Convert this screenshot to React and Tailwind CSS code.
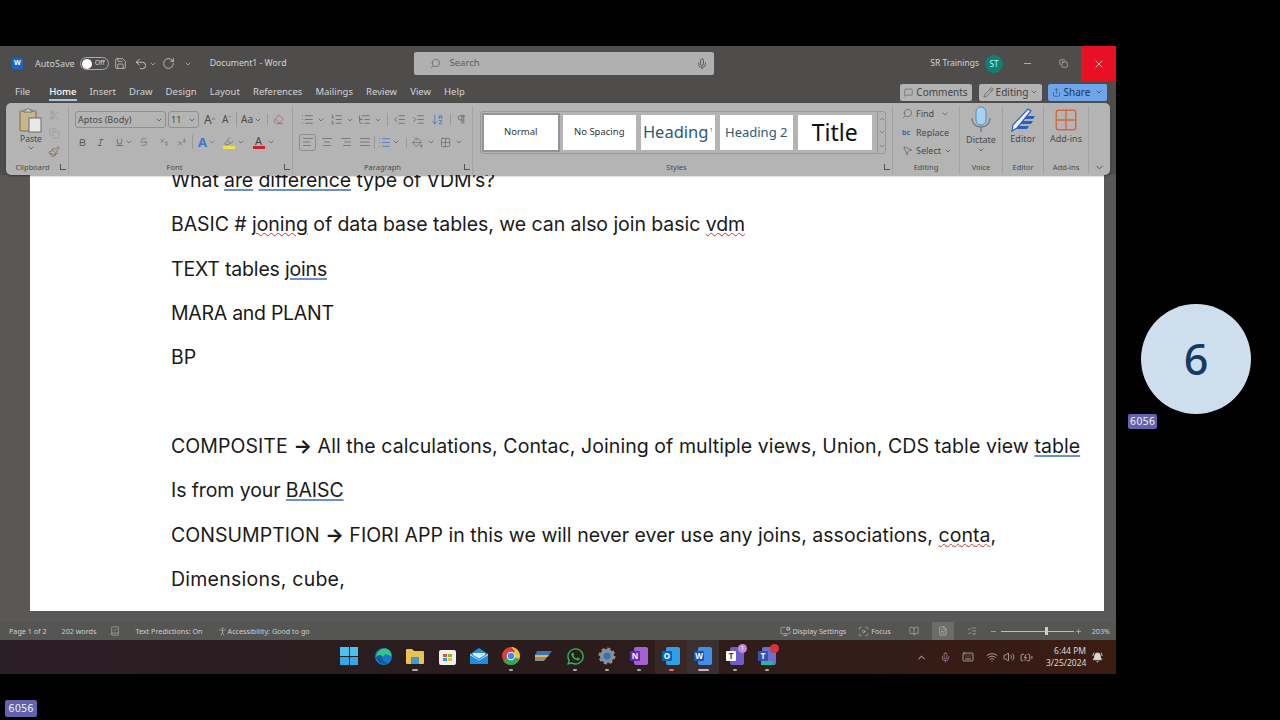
import {
  AlignCenter, AlignJustify, AlignLeft, AlignRight, ArrowDownAZ, Bold, BookOpen, ChevronDown, ChevronUp, Copy, Eraser,
  Grid2x2, Highlighter, IndentDecrease, IndentIncrease, Italic, Keyboard, List, ListOrdered, ListTree, Mic, Minus, MonitorCog,
  MousePointer2, PaintBucket, Paintbrush, Pencil, Pilcrow, Plus, RotateCw, Save, Scissors, Search, Share, Strikethrough, Subscript,
  Superscript, Underline, Undo2, Volume2, Wifi, X, MessageSquare, FileText, BellRing, BatteryCharging, Focus, PersonStanding, BookCheck, ListChecks,
} from 'lucide-react';
import { FaWhatsapp } from 'react-icons/fa';

const TABS = ['Insert', 'Draw', 'Design', 'Layout', 'References', 'Mailings', 'Review', 'View', 'Help'];

const DOC_LINES = [
  { id: 1, track: 'tracking-[-0.1px]', parts: ['What ', ['are', 'b'], ' ', ['difference', 'b'], ' type of VDM’s?'] },
  { id: 2, track: 'tracking-[-0.06px]', parts: ['BASIC # ', ['joning', 'r'], ' of data base tables, we can also join basic ', ['vdm', 'r']] },
  { id: 3, track: 'tracking-[-0.18px]', parts: ['TEXT tables ', ['joins', 'b']] },
  { id: 4, track: 'tracking-[-0.28px]', parts: ['MARA and PLANT'] },
  { id: 5, track: '', parts: ['BP'] },
  { id: 6, track: '', parts: ['\u00a0'] },
  { id: 7, track: 'tracking-[0.07px]', parts: ['COMPOSITE ', ['→', 'a'], ' All the calculations, Contac, Joining of multiple views, Union, CDS table view ', ['table', 'b']] },
  { id: 8, track: 'tracking-[-0.1px]', parts: ['Is from your ', ['BAISC', 'b']] },
  { id: 9, track: 'tracking-[0.03px]', parts: ['CONSUMPTION ', ['→', 'a'], ' FIORI APP in this we will never ever use any joins, associations, ', ['conta', 'r'], ','] },
  { id: 10, track: 'tracking-[0.24px]', parts: ['Dimensions, cube,'] },
];

const MARK_CLASS = {
  r: 'underline decoration-wavy decoration-[#c0392b] decoration-1',
  b: 'underline decoration-[#6c90c8] decoration-[1.5px] underline-offset-2',
  a: 'font-bold',
};

function Caret({ className = 'text-[#444]' }) {
  return <ChevronDown size={8} strokeWidth={2} className={className} />;
}

function Group({ width, label, launcher, labelClass = '', children }) {
  return (
    <div className="flex flex-col shrink-0 border-r border-[#a2a2a2] mt-[3px] mb-[1px]" style={{ width }}>
      <div className="flex-1 min-h-0">{children}</div>
      <div className={`h-[13px] flex items-center justify-center relative text-[7.5px] text-[#4a4a4a] ${labelClass}`}>
        {label}
        {launcher && <span className="absolute right-[2px] top-[3px] w-[6px] h-[6px] border-l border-b border-[#555]" />}
      </div>
    </div>
  );
}

function StyleCard({ children, selected }) {
  return (
    <div className={`w-[73.5px] h-[35px] bg-white shrink-0 flex items-center justify-center text-[#333] overflow-hidden ${selected ? 'outline-2 outline-[#949494]' : ''}`}>
      {children}
    </div>
  );
}

function TaskIcon({ children, mark }) {
  return (
    <div className="w-[32px] h-[34px] flex flex-col items-center justify-center relative">
      {children}
      {mark && <span className={`absolute bottom-[3px] h-[2px] rounded-full ${mark}`} />}
    </div>
  );
}

function OfficeTile({ letter, letterBg, back }) {
  return (
    <div className="relative w-[18px] h-[18px] -mt-[2px]">
      <div className={`absolute right-0 top-0 w-[14px] h-[18px] rounded-[2px] ${back}`} />
      <div className={`absolute left-0 top-[4px] w-[10px] h-[10px] rounded-[1px] ${letterBg} flex items-center justify-center text-[8px] font-bold text-white`}>{letter}</div>
    </div>
  );
}

function PasteIcon() {
  return (
    <svg width="24" height="26" viewBox="0 0 24 26">
      <rect x="1" y="4" width="16" height="20" rx="1" fill="#c9b78c" stroke="#7d6b44" />
      <path d="M5 5V3h2.5a1.8 1.8 0 013.5 0H13v2z" fill="#d8d8d8" stroke="#6f6f6f" />
      <rect x="10" y="11" width="12" height="14" fill="#e8e8e8" stroke="#6a6a6a" />
    </svg>
  );
}

function MicIcon() {
  return (
    <svg width="22" height="28" viewBox="0 0 22 28">
      <rect x="6" y="1" width="10" height="18" rx="5" fill="#a9d0ee" stroke="#4f8fc6" />
      <path d="M2 12c0 6 4 9 9 9s9-3 9-9" fill="none" stroke="#6a7d8c" strokeWidth="1.3" />
      <path d="M11 21v5" stroke="#6a7d8c" strokeWidth="1.3" />
    </svg>
  );
}

function EditorIcon() {
  return (
    <svg width="24" height="25" viewBox="0 0 24 25">
      <path d="M10 8h14l-2 3H9zM8 13h14l-2 3H7zM6 18h12l-2 3H5z" fill="#2c5fc2" />
      <path d="M17 1l3 2L6 20l-5 3 1-6z" fill="#f2f2f2" stroke="#2c5fc2" strokeWidth="1.2" />
    </svg>
  );
}

export default function App() {
  return (
    <div className="relative w-[1280px] h-[720px] bg-black overflow-hidden pt-[46px] font-['Noto_Sans',sans-serif]">
      <div className="w-[1116px] h-[628px] bg-[#4f4c4c] flex flex-col">
        {/* title bar */}
        <div className="h-[35px] shrink-0 flex items-center text-[#d6d6d6] text-[9px]">
          <div className="ml-[12px] w-[11px] h-[11px] rounded-[1px] bg-[#1d63c8] text-white text-[7px] font-bold flex items-center justify-center">W</div>
          <span className="ml-[12px] text-[#d0d0d0]">AutoSave</span>
          <div className="ml-[5px] w-[29px] h-[13px] rounded-full border border-[#aaa] flex items-center gap-[3px] pl-[1px]">
            <span className="w-[10px] h-[10px] rounded-full bg-white" />
            <span className="text-[7px]">Off</span>
          </div>
          <Save size={13} strokeWidth={1.3} className="ml-[5px]" />
          <Undo2 size={14} strokeWidth={1.4} className="ml-[7px]" />
          <Caret className="ml-[1px] text-[#ccc]" />
          <RotateCw size={13} strokeWidth={1.4} className="ml-[5px]" />
          <Caret className="ml-[9px] text-[#ccc]" />
          <span className="ml-[18px] text-[8.7px]">Document1 - Word</span>
          <div className="ml-[127px] w-[300px] h-[23px] bg-[#b0b0b0] rounded-[2px] flex items-center text-[#5d5d5d] pl-[16px] pr-[6px]">
            <Search size={11} strokeWidth={1.5} className="-scale-x-100" />
            <span className="ml-[9px] text-[9.5px]">Search</span>
            <Mic size={12} className="ml-auto" />
          </div>
          <span className="ml-auto text-[8.5px]">SR Trainings</span>
          <div className="ml-[6px] w-[18px] h-[18px] rounded-full bg-[#0f7f78] flex items-center justify-center text-[8px] text-[#bfe]">ST</div>
          <Minus size={11} strokeWidth={1.5} className="ml-[19px]" />
          <Copy size={9} strokeWidth={1.5} className="ml-[26px]" />
          <div className="ml-[13px] w-[35px] h-[35px] bg-[#e81123] flex items-center justify-center">
            <X size={12} strokeWidth={1.6} className="text-white" />
          </div>
        </div>

        {/* tabs */}
        <div className="h-[22px] shrink-0 flex items-center text-[9.5px] text-[#d4d4d4] pl-[15px]">
          <span>File</span>
          <div className="ml-[19px] font-medium text-white border-b-2 border-[#a9c6e8] h-[17px] leading-[15px]">Home</div>
          <div className="ml-[13px] flex gap-[13.1px]">
            {TABS.map((t) => <span key={t}>{t}</span>)}
          </div>
          <div className="ml-auto flex items-center mr-[9px] text-[#444] text-[10px]">
            <div className="w-[72px] h-[17px] bg-[#b3b3b3] rounded-[2px] flex items-center justify-center gap-[3px]">
              <MessageSquare size={9} strokeWidth={1.3} />Comments
            </div>
            <div className="ml-[7px] w-[63px] h-[17px] bg-[#b3b3b3] rounded-[2px] flex items-center justify-center gap-[2px]">
              <Pencil size={11} strokeWidth={1.3} />Editing<Caret />
            </div>
            <div className="ml-[6px] w-[59px] h-[17px] bg-[#6fa5ea] rounded-[2px] flex items-center justify-center gap-[3px] text-[#23354f]">
              <Share size={9} strokeWidth={1.3} />Share<Caret className="ml-[2px] text-[#23354f]" />
            </div>
          </div>
        </div>

        {/* ribbon */}
        <div className="relative z-10 mx-[6px] h-[72px] shrink-0 bg-[#b4b4b4] rounded-[5px] flex text-[#4a4a4a] shadow-[0_1px_2px_rgba(0,0,0,0.4)]">
          <Group width={63} label="Clipboard" launcher labelClass="pr-[9px]">
            <div className="flex pt-[1px] pl-[13px] gap-[5px]">
              <div className="flex flex-col items-center">
                <PasteIcon />
                <span className="text-[8.5px] mt-[1px] leading-[10px]">Paste</span>
                <Caret />
              </div>
              <div className="flex flex-col gap-[7px] items-center pt-[3px]">
                <Scissors size={11} strokeWidth={1} className="text-[#8a8a8a]" />
                <Copy size={11} strokeWidth={1} className="text-[#8a8a8a]" />
                <Paintbrush size={12} strokeWidth={1.4} className="text-[#6e5c30]" />
              </div>
            </div>
          </Group>

          <Group width={224} label="Font" launcher labelClass="pr-[12px]">
            <div className="pl-[6px] pt-[5px]">
              <div className="flex items-center h-[17px]">
                <div className="w-[91px] h-[17px] border border-[#8f8f8f] rounded-[3px] flex items-center justify-between px-[2px] text-[9px]">Aptos (Body)<Caret /></div>
                <div className="ml-[2px] w-[31px] h-[17px] border border-[#8f8f8f] rounded-[3px] flex items-center justify-between px-[2px] text-[9px]">11<Caret /></div>
                <span className="ml-[5px] text-[12px]">A<sup className="text-[6px]">^</sup></span>
                <span className="ml-[7px] text-[10px]">A<sup className="text-[6px]">ˇ</sup></span>
                <span className="ml-[5px] pl-[4px] border-l border-[#999] text-[10px] flex items-center gap-[1px]">Aa<Caret /></span>
                <span className="ml-[5px] pl-[5px] border-l border-[#999]"><Eraser size={11} strokeWidth={1.3} className="text-[#a8416b]" /></span>
              </div>
              <div className="flex items-center h-[18px] mt-[5px] pl-[3px] text-[#555]">
                <Bold size={9} strokeWidth={2.5} />
                <Italic size={9} className="ml-[9px]" />
                <Underline size={9} className="ml-[10px]" /><Caret className="ml-[1px]" />
                <Strikethrough size={10} strokeWidth={1.2} className="ml-[6px]" />
                <Subscript size={10} strokeWidth={1.3} className="ml-[10px]" />
                <Superscript size={10} strokeWidth={1.3} className="ml-[8px]" />
                <span className="ml-[5px] pl-[5px] border-l border-[#999] flex items-center font-bold text-[13px] leading-[14px] text-[#3b78c9]">A<Caret className="ml-[1px]" /></span>
                <div className="ml-[6px] flex flex-col items-center w-[13px]"><Highlighter size={10} strokeWidth={1.3} /><span className="w-[12px] h-[3px] bg-[#f1e24c]" /></div>
                <Caret className="ml-[2px]" />
                <div className="ml-[7px] flex flex-col items-center w-[13px]"><span className="text-[11px] leading-[11px] text-[#444]">A</span><span className="w-[12px] h-[3px] bg-[#c9242b]" /></div>
                <Caret className="ml-[2px]" />
              </div>
            </div>
          </Group>

          <Group width={180} label="Paragraph" launcher>
            <div className="pl-[8px] pt-[5px] text-[#555]">
              <div className="flex items-center h-[17px]">
                <List size={13} strokeWidth={1.2} /><Caret className="ml-[3px]" />
                <ListOrdered size={13} strokeWidth={1.2} className="ml-[5px]" /><Caret className="ml-[3px]" />
                <ListTree size={13} strokeWidth={1.2} className="ml-[4px]" /><Caret className="ml-[3px]" />
                <span className="ml-[5px] pl-[5px] border-l border-[#999]"><IndentDecrease size={13} strokeWidth={1.2} /></span>
                <IndentIncrease size={13} strokeWidth={1.2} className="ml-[6px]" />
                <ArrowDownAZ size={13} strokeWidth={1.3} className="ml-[6px] text-[#2f6fb5]" />
                <span className="ml-[6px] pl-[5px] border-l border-[#999]"><Pilcrow size={11} strokeWidth={1.5} /></span>
              </div>
              <div className="flex items-center h-[18px] mt-[5px] -ml-[2px]">
                <span className="w-[17px] h-[17px] border border-[#8f8f8f] rounded-[3px] flex items-center justify-center"><AlignLeft size={12} strokeWidth={1.2} /></span>
                <AlignCenter size={12} strokeWidth={1.2} className="ml-[5px]" />
                <AlignRight size={12} strokeWidth={1.2} className="ml-[7px]" />
                <AlignJustify size={12} strokeWidth={1.2} className="ml-[7px]" />
                <span className="ml-[3px] pl-[3px] border-l border-[#999] flex items-center"><List size={13} strokeWidth={1.2} className="text-[#2f6fb5]" /><Caret className="ml-[1px]" /></span>
                <span className="ml-[6px] pl-[5px] border-l border-[#999] flex items-center"><PaintBucket size={11} strokeWidth={1.2} /><Caret className="ml-[4px]" /></span>
                <Grid2x2 size={11} strokeWidth={1.2} className="ml-[5px]" /><Caret className="ml-[4px]" />
              </div>
            </div>
          </Group>

          <Group width={420} label="Styles" launcher labelClass="pr-[12px]">
            <div className="ml-[7px] mt-[5px] w-[406px] h-[43px] border border-[#999] rounded-[3px] flex items-center pl-[3px] gap-[5px]">
              <StyleCard selected><span className="text-[9.5px]">Normal</span></StyleCard>
              <StyleCard><span className="text-[9.5px]">No Spacing</span></StyleCard>
              <StyleCard><span className="text-[16.5px] text-[#2d5a73]">Heading<span className="text-[5px] align-super"> 1</span></span></StyleCard>
              <StyleCard><span className="text-[13px] text-[#2d5a73]">Heading 2</span></StyleCard>
              <StyleCard><span className="text-[23px] text-[#111]">Title</span></StyleCard>
              <div className="ml-auto w-[11px] h-full border-l border-[#999] flex flex-col items-center justify-around text-[#666]">
                <ChevronUp size={8} /><ChevronDown size={8} /><ChevronDown size={8} />
              </div>
            </div>
          </Group>

          <Group width={67} label="Editing">
            <div className="pl-[9px] flex flex-col gap-[3px] text-[9px] leading-[15.5px]">
              <div className="flex items-center gap-[3px]"><Search size={11} strokeWidth={1.2} className="-scale-x-100" />Find<Caret className="ml-[4px]" /></div>
              <div className="flex items-center gap-[3px]"><span className="w-[11px] text-[7px] font-bold text-[#2f6fb5]">bc</span>Replace</div>
              <div className="flex items-center gap-[3px]"><MousePointer2 size={11} strokeWidth={1.2} />Select<Caret /></div>
            </div>
          </Group>

          <Group width={43} label="Voice">
            <div className="flex flex-col items-center">
              <MicIcon />
              <span className="text-[9px] leading-[12px]">Dictate</span>
              <Caret />
            </div>
          </Group>

          <Group width={41} label="Editor">
            <div className="flex flex-col items-center pt-[2px]">
              <EditorIcon />
              <span className="text-[9px] leading-[12px]">Editor</span>
            </div>
          </Group>

          <Group width={45} label="Add-ins">
            <div className="flex flex-col items-center pt-[1px]">
              <Grid2x2 size={26} strokeWidth={1.3} className="text-[#d0693f]" />
              <span className="text-[9px] leading-[12px]">Add-ins</span>
            </div>
          </Group>

          <div className="flex-1 flex items-end justify-center pb-[2px]"><ChevronDown size={11} /></div>
        </div>

        {/* document */}
        <div className="flex-1 min-h-0 bg-[#5a5857] pl-[30px] pr-[12px] pb-[11px]">
          <div className="h-full bg-white overflow-hidden pl-[141px] font-['Inter',sans-serif] text-[19.5px] leading-[44.35px] text-[#1a1a1a] whitespace-nowrap">
            <div className="-mt-[17px]">
              {DOC_LINES.map((line) => (
                <div key={line.id} className={line.track}>
                  {line.parts.map((p, i) => (
                    typeof p === 'string' ? <span key={i}>{p}</span> : <span key={i} className={MARK_CLASS[p[1]]}>{p[0]}</span>
                  ))}
                </div>
              ))}
            </div>
          </div>
        </div>

        {/* status bar */}
        <div className="h-[18px] shrink-0 bg-[#555553] flex items-center text-[7.2px] text-[#cfcfcf] pl-[9px] pr-[6px]">
          <span>Page 1 of 2</span>
          <span className="ml-[15px]">202 words</span>
          <BookCheck size={10} strokeWidth={1.2} className="ml-[14px]" />
          <span className="ml-[15px]">Text Predictions: On</span>
          <PersonStanding size={11} strokeWidth={1.2} className="ml-[14px]" />
          <span>Accessibility: Good to go</span>
          <MonitorCog size={11} strokeWidth={1.2} className="ml-auto" />
          <span className="ml-[2px]">Display Settings</span>
          <Focus size={11} strokeWidth={1.2} className="ml-[12px]" />
          <span className="ml-[2px]">Focus</span>
          <BookOpen size={10} strokeWidth={1.2} className="ml-[18px]" />
          <div className="ml-[13px] w-[22px] h-[18px] bg-[#6b6b69] flex items-center justify-center"><FileText size={10} strokeWidth={1.2} /></div>
          <ListChecks size={10} strokeWidth={1.2} className="ml-[13px]" />
          <Minus size={7} className="ml-[13px]" />
          <div className="ml-[4px] w-[73px] h-px bg-[#bbb] flex items-center pl-[44px]"><span className="w-[3px] h-[8px] bg-[#ccc]" /></div>
          <Plus size={7} className="ml-[1px]" />
          <span className="ml-[10px]">203%</span>
        </div>

        {/* taskbar */}
        <div className="h-[34px] shrink-0 bg-gradient-to-r from-[#2b1f26] via-[#2a1c1c] to-[#3b1c12] flex items-center text-[#d8d8d8]">
          <div className="ml-[333px] flex items-center">
            <div className="mr-[2px]">
              <TaskIcon>
                <div className="grid grid-cols-2 gap-px w-[18px] h-[18px] -mt-[2px]">
                  <span className="bg-[#4cc2f1]" /><span className="bg-[#4cc2f1]" /><span className="bg-[#35a8e6]" /><span className="bg-[#35a8e6]" />
                </div>
              </TaskIcon>
            </div>
            <TaskIcon>
              <svg className="-mt-[2px]" width="19" height="19" viewBox="0 0 20 20"><circle cx="10" cy="10" r="9" fill="#1678c8" /><path d="M2 11C3 4 9 0 14 2c4 1.5 5 6 4 8-3-3-8-3-9 1 0 4 4 6 8 5-5 4-13 2-15-5z" fill="#35c38b" /><path d="M9 11c0 4 4 6 8 5-5 4-13 2-15-5 3-4 7-3 7 0z" fill="#0d5aa7" /></svg>
            </TaskIcon>
            <TaskIcon mark="w-[6px] bg-[#aaa]">
              <svg className="-mt-[2px]" width="18" height="17" viewBox="0 0 18 17"><path d="M0 2a1 1 0 011-1h5l2 2h9a1 1 0 011 1v11a1 1 0 01-1 1H1a1 1 0 01-1-1z" fill="#eec14c" /><rect x="5" y="9" width="8" height="7" fill="#3a9bd8" /></svg>
            </TaskIcon>
            <TaskIcon>
              <div className="w-[17px] h-[15px] bg-[#f2f0ec] rounded-[2px] grid grid-cols-2 gap-px p-[4px]">
                <span className="bg-[#e0553a]" /><span className="bg-[#7fb93a]" /><span className="bg-[#2f9ae0]" /><span className="bg-[#eeb934]" />
              </div>
            </TaskIcon>
            <TaskIcon>
              <svg className="-mt-[2px]" width="18" height="16" viewBox="0 0 18 16"><path d="M0 6L9 0l9 6v10H0z" fill="#1f8fdc" /><path d="M0 6l9 6 9-6v1l-9 5.5L0 7z" fill="#e8f4fc" /><path d="M3 5h12v2l-6 3.5L3 7z" fill="#d7ecfa" /></svg>
            </TaskIcon>
            <TaskIcon mark="w-[4px] bg-[#aaa]">
              <svg className="-mt-[2px]" width="18" height="18" viewBox="0 0 18 18"><circle cx="9" cy="9" r="9" fill="#d8413a" /><path d="M9 9L1.2 13.5A9 9 0 009 18c3 0 7-2 8.5-6z" fill="#3aa655" /><path d="M9 0a9 9 0 018.4 12L9 9l4-5z" fill="#f1c232" /><circle cx="9" cy="9" r="4.3" fill="#f5f5f5" /><circle cx="9" cy="9" r="3.3" fill="#4285f4" /></svg>
            </TaskIcon>
            <TaskIcon>
              <svg className="-mt-[2px]" width="18" height="10" viewBox="0 0 18 10"><path d="M3 0h15l-3 4H1z" fill="#3b73b0" /><path d="M1 4h14l-1.5 2H1z" fill="#e4b93d" /><path d="M1 6h12l-3 4H1z" fill="#8c8c8c" /></svg>
            </TaskIcon>
            <TaskIcon mark="w-[4px] bg-[#aaa]"><FaWhatsapp size={19} className="text-[#2fb457] -mt-[2px]" /></TaskIcon>
            <TaskIcon mark="w-[4px] bg-[#aaa]">
              <svg className="-mt-[2px]" width="18" height="18" viewBox="0 0 18 18"><circle cx="9" cy="9" r="7" fill="#8a8f96" stroke="#8a8f96" strokeWidth="3" strokeDasharray="3 2.5" /><circle cx="9" cy="9" r="6" fill="#8a8f96" /><circle cx="9" cy="9" r="3.5" fill="#2f72c4" /></svg>
            </TaskIcon>
            <TaskIcon mark="w-[4px] bg-[#aaa]"><OfficeTile letter="N" letterBg="bg-[#6a2ba0]" back="bg-[#a45fd0]" /></TaskIcon>
            <div className="bg-[#3b2626]"><TaskIcon mark="w-[5px] bg-[#e86a6a]"><OfficeTile letter="O" letterBg="bg-[#0b64b8]" back="bg-[#2ea0e6]" /></TaskIcon></div>
            <div className="bg-[#3a3030]"><TaskIcon mark="w-[11px] bg-[#d7a8d8]"><OfficeTile letter="W" letterBg="bg-[#1a55b0]" back="bg-[#3f8fe8]" /></TaskIcon></div>
            <TaskIcon mark="w-[4px] bg-[#aaa]">
              <div className="relative">
                <OfficeTile letter="T" letterBg="bg-white !text-[#444]" back="bg-[#6b5fc7]" />
                <span className="absolute -top-[5px] -right-[3px] w-[9px] h-[9px] rounded-full bg-[#c58ad6] text-[6px] leading-[9px] text-center text-white">1</span>
              </div>
            </TaskIcon>
            <TaskIcon mark="w-[4px] bg-[#aaa]">
              <div className="relative">
                <OfficeTile letter="T" letterBg="bg-[#3a4fb0]" back="bg-[#6b6fd0]" />
                <span className="absolute -top-[5px] -right-[3px] w-[9px] h-[9px] rounded-full bg-[#d9333b]" />
                <span className="absolute bottom-0 left-[3px] w-[12px] h-[4px] bg-[#2bb3a0]" />
              </div>
            </TaskIcon>
          </div>
          <ChevronUp size={11} strokeWidth={2} className="ml-[133px]" />
          <Mic size={11} strokeWidth={1.5} className="ml-[13px] text-[#b68fc4]" />
          <Keyboard size={12} strokeWidth={1.3} className="ml-[11px]" />
          <Wifi size={12} strokeWidth={1.3} className="ml-[12px]" />
          <Volume2 size={12} strokeWidth={1.3} className="ml-[5px]" />
          <BatteryCharging size={13} strokeWidth={1.3} className="ml-[5px]" />
          <div className="ml-[13px] text-right text-[8.5px] leading-[12px] w-[40px]">
            <div>6:44 PM</div>
            <div>3/25/2024</div>
          </div>
          <BellRing size={11} strokeWidth={1.8} className="ml-[6px] fill-[#d8d8d8]" />
        </div>
      </div>

      {/* video overlay */}
      <div className="absolute left-[1141px] top-[304px] w-[110px] h-[110px] rounded-full bg-[#cfdeec] flex items-center justify-center text-[#153a63] text-[43px] font-medium font-['Noto_Sans',sans-serif]">6</div>
      <div className="absolute left-[1128px] top-[414px] w-[29px] h-[15px] rounded-[2px] bg-[#6362ab] text-[#e8e8f4] text-[10px] flex items-center justify-center font-['DejaVu_Sans',sans-serif]">6056</div>
      <div className="absolute left-[5px] top-[700px] w-[32px] h-[17px] rounded-[2px] bg-[#6362ab] text-[#e8e8f4] text-[10px] flex items-center justify-center font-['DejaVu_Sans',sans-serif]">6056</div>
    </div>
  );
}
